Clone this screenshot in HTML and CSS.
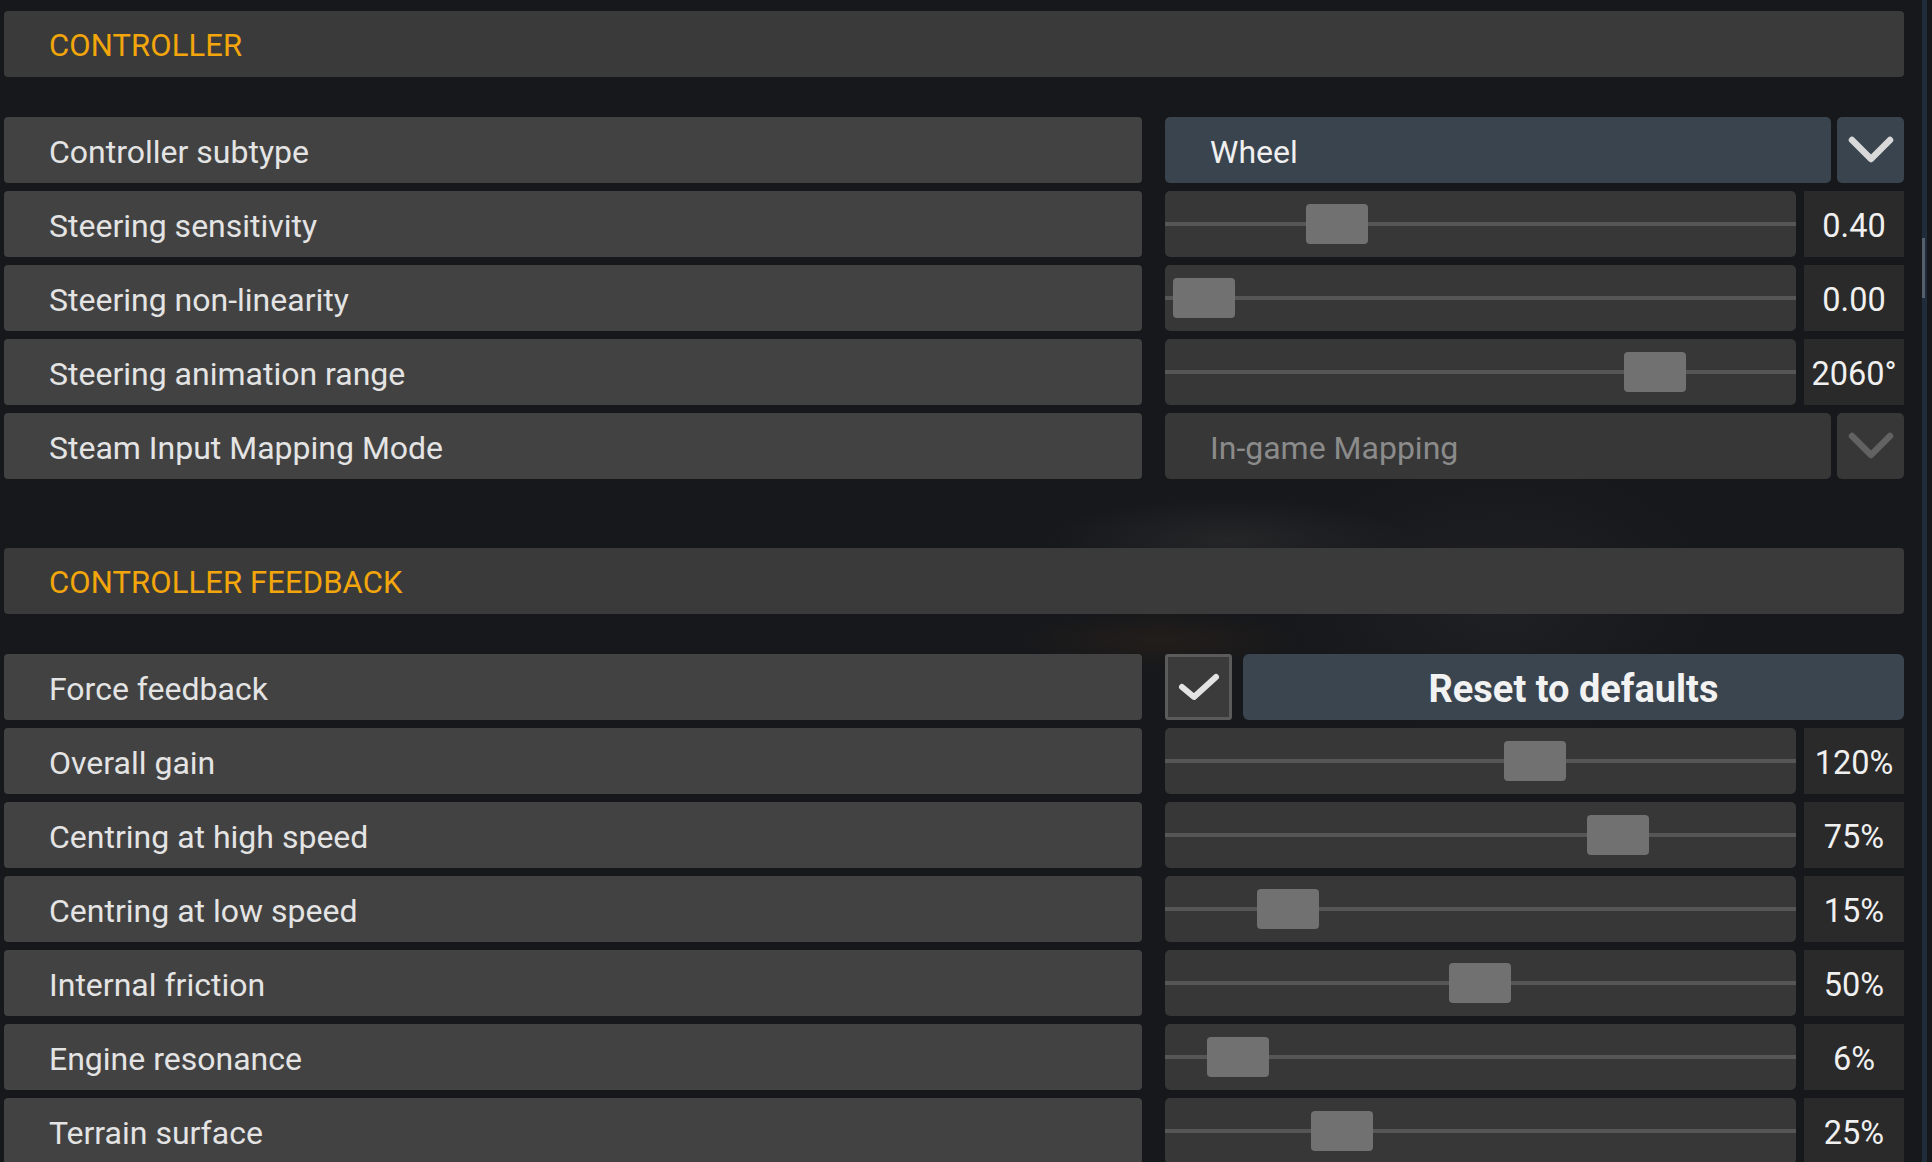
FILE: index.html
```html
<!DOCTYPE html>
<html lang="en">
<head>
<meta charset="utf-8">
<title>Controller settings</title>
<link rel="stylesheet" href="styles.css">
</head>
<body>
<div class="backdrop"></div>
<main class="panel">
  <section class="section">
    <div class="section-header">CONTROLLER</div>
    <div class="rows">
      <div class="row">
        <div class="label">Controller subtype</div>
        <div class="control dropdown">
          <div class="dropdown-value">Wheel</div>
          <div class="dropdown-btn">
            <svg class="chevron" viewBox="0 0 46 28" width="46" height="28"><polyline points="4,4 23,23 42,4"/></svg>
          </div>
        </div>
      </div>
      <div class="row">
        <div class="label">Steering sensitivity</div>
        <div class="control slider-ctl">
          <div class="slider"><div class="track"></div><div class="thumb" style="left:141px"></div></div>
          <div class="value">0.40</div>
        </div>
      </div>
      <div class="row">
        <div class="label">Steering non-linearity</div>
        <div class="control slider-ctl">
          <div class="slider"><div class="track"></div><div class="thumb" style="left:8px"></div></div>
          <div class="value">0.00</div>
        </div>
      </div>
      <div class="row">
        <div class="label">Steering animation range</div>
        <div class="control slider-ctl">
          <div class="slider"><div class="track"></div><div class="thumb" style="left:459px"></div></div>
          <div class="value">2060°</div>
        </div>
      </div>
      <div class="row">
        <div class="label">Steam Input Mapping Mode</div>
        <div class="control dropdown disabled">
          <div class="dropdown-value">In-game Mapping</div>
          <div class="dropdown-btn">
            <svg class="chevron" viewBox="0 0 46 28" width="46" height="28"><polyline points="4,4 23,23 42,4"/></svg>
          </div>
        </div>
      </div>
    </div>
  </section>

  <section class="section">
    <div class="section-header">CONTROLLER FEEDBACK</div>
    <div class="rows">
      <div class="row">
        <div class="label">Force feedback</div>
        <div class="control toggle-ctl">
          <div class="checkbox">
            <svg class="check" viewBox="0 0 44 30" width="44" height="30"><polyline points="5,15 17,25 39,5"/></svg>
          </div>
          <button class="reset">Reset to defaults</button>
        </div>
      </div>
      <div class="row">
        <div class="label">Overall gain</div>
        <div class="control slider-ctl">
          <div class="slider"><div class="track"></div><div class="thumb" style="left:339px"></div></div>
          <div class="value">120%</div>
        </div>
      </div>
      <div class="row">
        <div class="label">Centring at high speed</div>
        <div class="control slider-ctl">
          <div class="slider"><div class="track"></div><div class="thumb" style="left:422px"></div></div>
          <div class="value">75%</div>
        </div>
      </div>
      <div class="row">
        <div class="label">Centring at low speed</div>
        <div class="control slider-ctl">
          <div class="slider"><div class="track"></div><div class="thumb" style="left:92px"></div></div>
          <div class="value">15%</div>
        </div>
      </div>
      <div class="row">
        <div class="label">Internal friction</div>
        <div class="control slider-ctl">
          <div class="slider"><div class="track"></div><div class="thumb" style="left:284px"></div></div>
          <div class="value">50%</div>
        </div>
      </div>
      <div class="row">
        <div class="label">Engine resonance</div>
        <div class="control slider-ctl">
          <div class="slider"><div class="track"></div><div class="thumb" style="left:42px"></div></div>
          <div class="value">6%</div>
        </div>
      </div>
      <div class="row">
        <div class="label">Terrain surface</div>
        <div class="control slider-ctl">
          <div class="slider"><div class="track"></div><div class="thumb" style="left:146px"></div></div>
          <div class="value">25%</div>
        </div>
      </div>
    </div>
  </section>
</main>
<div class="scrollbar"><div class="scroll-thumb"></div></div>
</body>
</html>
```

FILE: styles.css
```css
html, body {
  margin: 0;
  padding: 0;
  overflow: hidden;
  height: 100%;
}

body {
  background: #17181b;
  font-family: Roboto, "Liberation Sans", sans-serif;
  color: #e6e6e6;
  position: relative;
}

.backdrop {
  position: absolute;
  inset: 0;
  background:
    radial-gradient(ellipse 260px 60px at 1230px 540px, rgba(70, 70, 70, 0.3), transparent 70%),
    radial-gradient(ellipse 200px 40px at 1160px 640px, rgba(120, 70, 20, 0.12), transparent 70%),
    radial-gradient(ellipse 300px 200px at 1500px 600px, rgba(40, 40, 44, 0.5), transparent 70%);
  pointer-events: none;
}

.panel {
  position: relative;
  width: 1900px;
  padding: 11px 0 0 4px;
  display: flex;
  flex-direction: column;
  gap: 69px;
}

.section {
  display: flex;
  flex-direction: column;
  gap: 40px;
}

.section-header {
  height: 66px;
  box-sizing: border-box;
  background: #3a3a3a;
  border-radius: 4px;
  display: flex;
  align-items: center;
  padding: 3px 0 0 45px;
  font-size: 31px;
  color: #f2a60c;
  letter-spacing: 0.1px;
}

.rows {
  display: flex;
  flex-direction: column;
  gap: 8px;
}

.row {
  display: grid;
  grid-template-columns: 1138px 739px;
  column-gap: 23px;
  height: 66px;
}

.label {
  background: #424242;
  border-radius: 4px;
  display: flex;
  align-items: center;
  padding: 4px 0 0 45px;
  font-size: 32px;
  color: #e4e4e4;
}

.control {
  display: flex;
  height: 66px;
}

/* dropdown */
.dropdown {
  gap: 6px;
}

.dropdown-value {
  flex: 1;
  background: #3a444e;
  border-radius: 5px;
  display: flex;
  align-items: center;
  padding: 4px 0 0 45px;
  font-size: 32px;
  color: #f0f0f0;
}

.dropdown-btn {
  width: 67px;
  background: #3a444e;
  border-radius: 5px;
  display: flex;
  align-items: center;
  justify-content: center;
}

.chevron polyline {
  fill: none;
  stroke: #d9d9d9;
  stroke-width: 6.5;
  stroke-linecap: round;
  stroke-linejoin: round;
}

.dropdown.disabled .dropdown-value,
.dropdown.disabled .dropdown-btn {
  background: #373737;
}

.dropdown.disabled .dropdown-value {
  color: #8b8b8b;
}

.dropdown.disabled .chevron polyline {
  stroke: #626262;
}

/* slider */
.slider-ctl {
  gap: 8px;
}

.slider {
  flex: 1;
  position: relative;
  background: #373737;
  border-radius: 5px;
}

.track {
  position: absolute;
  left: 0;
  right: 0;
  top: 31px;
  height: 4px;
  background: #565656;
}

.thumb {
  position: absolute;
  top: 13px;
  width: 62px;
  height: 40px;
  background: #717171;
  border-radius: 4px;
}

.value {
  width: 100px;
  background: #2a2a2a;
  display: flex;
  align-items: center;
  justify-content: center;
  padding-top: 4px;
  box-sizing: border-box;
  font-size: 32.5px;
  color: #f0f0f0;
}

/* toggle + reset */
.toggle-ctl {
  gap: 11px;
}

.checkbox {
  width: 67px;
  box-sizing: border-box;
  border: 3px solid #5b5b5b;
  border-radius: 3px;
  background: #3b3b3b;
  display: flex;
  align-items: center;
  justify-content: center;
}

.check polyline {
  fill: none;
  stroke: #e4e4e4;
  stroke-width: 6;
  stroke-linecap: round;
  stroke-linejoin: round;
}

.reset {
  flex: 1;
  border: none;
  background: #3a4550;
  border-radius: 6px;
  font-family: Roboto, "Liberation Sans", sans-serif;
  font-weight: 700;
  font-size: 38px;
  color: #f2f2f2;
  padding: 4px 0 0;
}

.scrollbar {
  position: absolute;
  top: 0;
  bottom: 0;
  left: 1922px;
  width: 5px;
  background: #1f2c3c;
}

.scroll-thumb {
  margin-top: 238px;
  width: 3px;
  height: 60px;
  background: #55606c;
}
```
